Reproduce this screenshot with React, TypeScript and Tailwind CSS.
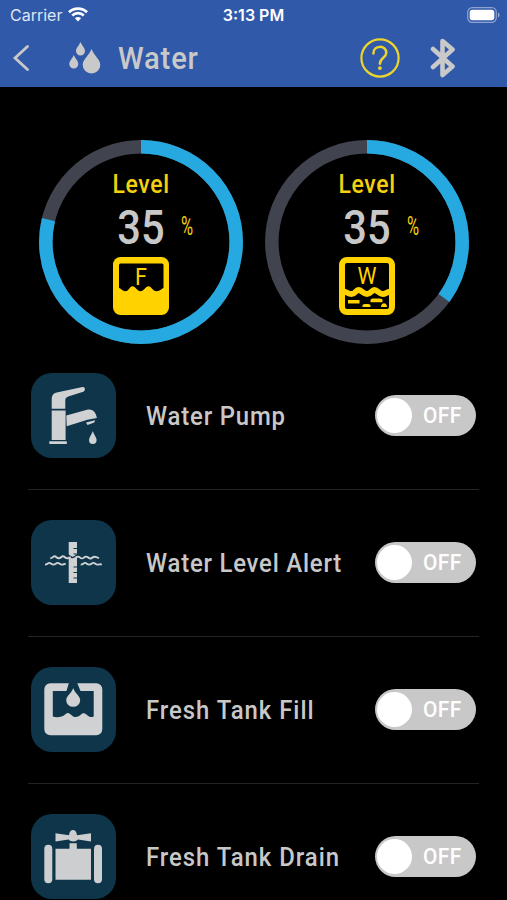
import React, { useState } from 'react';

const Wifi = () => (
  <svg width="20" height="15" viewBox="0 0 20 15" fill="none" stroke="#fff" strokeWidth="2.7">
    <path d="M1 5.2C6 .4 14 .4 19 5.2" />
    <path d="M4.2 8.6C7.6 5.4 12.4 5.4 15.8 8.6" />
    <path d="M10 14.4 6.9 11.3C8.7 9.6 11.3 9.6 13.1 11.3Z" fill="#fff" stroke="none" />
  </svg>
);

const Battery = () => (
  <svg width="33" height="16" viewBox="0 0 33 16">
    <rect x=".7" y=".7" width="28.6" height="14.6" rx="4.6" fill="none" stroke="#fff" strokeOpacity=".45" strokeWidth="1.2" />
    <rect x="2.7" y="2.7" width="24.6" height="10.6" rx="2.8" fill="#fff" />
    <path d="M31 5.5c2 .8 2 4.2 0 5z" fill="#fff" fillOpacity=".5" />
  </svg>
);

const Drops = () => (
  <svg width="32" height="32" viewBox="0 0 32 32" fill="#c9c9c9">
    <path d="M11.5 0C13 3.6 16 6 16 9a4.4 4.4 0 0 1-9 0c0-3 3-5.4 4.5-9z" />
    <path d="M4.8 13c1.5 3.5 4.5 6 4.5 9a4.5 4.5 0 0 1-9 0c0-3 3-5.5 4.5-9z" />
    <path d="M22.5 7c2.5 6.5 8.8 10.5 8.8 16a8.7 8.3 0 0 1-17.6 0c0-5.5 6.3-9.5 8.8-16z" />
  </svg>
);

const Help = () => (
  <svg width="40" height="40" viewBox="0 0 40 40" fill="none" stroke="#edd42d">
    <circle cx="20" cy="20" r="18.6" strokeWidth="2.2" />
    <path d="M13.4 15.4C13.4 6.8 26.3 6.8 26.3 14.8C26.3 20 19.9 19.6 19.9 25.8" strokeWidth="2.5" strokeLinecap="round" />
    <circle cx="19.9" cy="30.1" r="1.9" fill="#edd42d" stroke="none" />
  </svg>
);

const Bluetooth = () => (
  <svg width="26" height="40" viewBox="0 0 26 40" fill="none" stroke="#c9c9c9" strokeWidth="4.6" strokeLinecap="round" strokeLinejoin="round">
    <path d="M3 11 22.5 28.5 12.5 37V3L22.5 11.5 3 29" />
  </svg>
);

const FreshTank = () => (
  <svg width="56" height="58" viewBox="0 0 56 58">
    <rect width="56" height="58" rx="7.5" fill="#ffd200" />
    <path d="M7.5 6.5H49a1.5 1.5 0 0 1 1.5 1.5V31C48.5 31.5 47.5 34.2 43.5 34.2S38.5 29.3 35.5 29.3 31 34.2 27.5 34.2 22.5 29.3 19.5 29.3 16 34.2 12.5 34.2 8.5 31.5 6 31V8a1.5 1.5 0 0 1 1.5-1.5z" fill="#000" />
    <text x="28" y="27.5" textAnchor="middle" fontFamily="Roboto, sans-serif" fontSize="24" fill="#ffd200" textLength="12" lengthAdjust="spacingAndGlyphs">F</text>
  </svg>
);

const WasteTank = () => (
  <svg width="56" height="58" viewBox="0 0 56 58">
    <rect x="3" y="3" width="50" height="52" rx="5" fill="#000" stroke="#ffd200" strokeWidth="6" />
    <path d="M4 34.5C8 34.5 8.5 37 12.5 37S16.5 33 19.5 33 24 37 28 37 32.5 33 35.5 33 40 37 43.5 37 48 34.5 52 34.5" fill="none" stroke="#ffd200" strokeWidth="5.8" />
    <path d="M9 43H20.5V46.5H9zM31.5 43c0-1 1-1.6 3-1.6h6c2 0 3 .8 3 1.6v2.3h-12zM23.5 48.3c0-1.8 8-1.8 8 0V50h-8zM42 50c0-5 6-5 6 0z" fill="#ffd200" />
    <text x="28" y="27" textAnchor="middle" fontFamily="Roboto, sans-serif" fontSize="23" fill="#ffd200" textLength="19" lengthAdjust="spacingAndGlyphs">W</text>
  </svg>
);

const Faucet = () => (
  <svg width="85" height="85" viewBox="0 0 85 85" fill="#cfd1d3">
    <path d="M20.7 35.7V26c0-3.5 1.5-5.7 5-6.4L51.5 14c2.8-.5 3.3 3.6.8 4.7L38 23.2c-2.5.8-3.7 1.8-3.7 4v8.5z" />
    <path d="M20.7 37.5h13.9V67H20.7zM18.3 68.3h17.5V71H18.3z" />
    <path d="M35.3 42.6 56 36.7c5-1.3 9 1.8 9.9 8.3l-9.5 1.8-20.7 6.5z" />
    <path d="M55 49.5 64 47.3c0 1.5-.8 2.5-2 2.8l-5.5 1.8z" />
    <path d="M61.8 58c1 3.7 3.8 6.2 3.8 9a3.8 4 0 0 1-7.6 0c0-2.8 2.8-5.3 3.8-9z" />
  </svg>
);

const LevelAlert = () => (
  <svg width="85" height="85" viewBox="0 0 85 85" fill="none">
    <path d="M37.7 22H46V63H37.7z" fill="#cfd1d3" />
    <path d="M46 28.5h-3.500M46 34h-3.500M46 47h-3.500M46 52.5h-3.500M46 58h-3.500" stroke="#0e3549" strokeWidth="1.2" />
    <path d="M36.500 35c2 0 2.500 2.500 5 2.500s3-2.500 5.500-2.500" stroke="#0e3549" strokeWidth="1.5" />
    <g stroke="#cfd1d3" strokeWidth="1.9">
      <path d="M19.3 38.3c2.5 0 2.5-2 4.3-2s2 2 4.2 2 2.3-2 4.2-2 2 2 4.2 2 2.5-1 3.5-1M45 37.5c1-1.2 3-1.2 4 0s3 1.2 4 0 3-1.2 4.3 0 3 1.2 4.2 0 3-1.2 6.5.8" />
      <path d="M14 44.6c2.5 0 2.5-1.7 4.3-1.7s2 1.7 4.2 1.7 2.3-1.7 4.2-1.7 2 1.7 4.2 1.7 2.2-.8 3.8-.8M49.7 44.6c2.5 0 2.5-1.7 4.3-1.7s2 1.7 4.2 1.7 2.3-1.7 4.2-1.7 2 1.7 4.2 1.7 2.2-.8 4.2 0" />
    </g>
  </svg>
);

const TankFill = () => (
  <svg width="85" height="85" viewBox="0 0 85 85">
    <path d="M19.3 16.3H37.8L35.5 24H49.500L46.3 16.3H65.300a6 6 0 0 1 6 6v40a6 6 0 0 1-6 6h-46a6 6 0 0 1-6-6v-40a6 6 0 0 1 6-6z" fill="#d0d1d2" />
    <path d="M21.8 24H62.7V49.5C60.5 50.5 58.5 50.3 56 48S52 45.5 50 47.5 44 51.5 41 48.500 36.500 45 34 47.500 26 51 21.800 49.500z" fill="#0e3549" />
    <path d="M42.2 21c1.8 5.5 7 8 7 12.3a7 6.5 0 0 1-14 0c0-4.3 5.2-6.8 7-12.3z" fill="#d0d1d2" />
  </svg>
);

const TankDrain = () => (
  <svg width="85" height="85" viewBox="0 0 85 85" fill="#cccecf">
    <rect x="13.3" y="30.7" width="8" height="38.5" rx="4" />
    <rect x="63" y="30.7" width="8" height="38.5" rx="4" />
    <path d="M24.5 34.7h14v-5.5h7.3v5.5H60v31H24.5z" />
    <path d="M24.5 19.2 38 21.3C38.5 14.3 45.5 14.3 46 21.3L60 19.2v8.2L47 25.5c-2 2.5-7.5 2.5-9.5 0l-13 1.9z" />
  </svg>
);

interface GaugeProps {
  percent: number;
  value: number;
  children: React.ReactNode;
}

const Gauge: React.FC<GaugeProps> = ({ percent, value, children }) => (
  <div className="relative w-[204px] h-[204px]">
    <svg className="absolute inset-0" width="204" height="204" viewBox="0 0 204 204" fill="none" strokeWidth="13.5">
      <circle cx="102" cy="102" r="95.2" stroke="#41444e" />
      <circle cx="102" cy="102" r="95.2" stroke="#25a9e0" pathLength="100" strokeDasharray={`${percent} 100`} transform="rotate(-90 102 102)" />
    </svg>
    <div className="relative flex flex-col items-center pt-[30px]">
      <div className="text-[25px] leading-[30px] -mb-[2px] font-medium text-[#f5d00f] tracking-[0.7px] scale-x-[0.92]">Level</div>
      <div className="grid grid-cols-[1fr_48px_1fr] w-full h-[59px]">
        <span className="col-start-2 flex justify-center text-[49px] leading-[60px] font-medium text-[#c8c8c8] scale-x-[0.85]">{value}</span>
        <span className="pl-[16px] pt-[15px] text-[25px] leading-[28px] text-[#f5d00f]">
          <span className="inline-block origin-left scale-x-[0.66]">%</span>
        </span>
      </div>
      {children}
    </div>
  </div>
);

const rows = [
  { label: 'Water Pump', icon: <Faucet />, text: 'tracking-[0.9px]' },
  { label: 'Water Level Alert', icon: <LevelAlert />, text: 'tracking-[0.85px]' },
  { label: 'Fresh Tank Fill', icon: <TankFill />, text: 'tracking-[1.05px]' },
  { label: 'Fresh Tank Drain', icon: <TankDrain />, text: 'tracking-[1.05px]' },
];

export default function App() {
  const [on, setOn] = useState<boolean[]>([false, false, false, false]);

  return (
    <div className="w-[507px] h-[900px] overflow-hidden bg-black font-['Roboto',sans-serif]">
      <header className="h-[87px] bg-[#3159a9]">
        <div className="h-[29px] px-[10px] grid grid-cols-[1fr_auto_1fr] items-center text-white font-['Inter',sans-serif]">
          <div className="flex items-center gap-[6px] text-[16px] text-[#dfe6f4]">
            <span>Carrier</span>
            <Wifi />
          </div>
          <span className="text-[16px] font-semibold">3:13 PM</span>
          <div className="flex justify-end -mr-[3px]"><Battery /></div>
        </div>
        <div className="h-[58px] flex items-center">
          <button className="ml-[12px]">
            <svg width="18" height="28" viewBox="0 0 18 28" fill="none" stroke="#c9c9c9" strokeWidth="2.8" strokeLinecap="round">
              <path d="M15.5 2.5 3 14l12.5 11.5" />
            </svg>
          </button>
          <div className="ml-[39px]"><Drops /></div>
          <h1 className="ml-[17px] mt-[2px] w-[242px] text-[31px] leading-[36px] font-medium text-[#c9c9c9] tracking-[0.9px] origin-left scale-x-[0.94]">Water</h1>
          <button><Help /></button>
          <div className="ml-[30px]"><Bluetooth /></div>
        </div>
      </header>

      <section className="h-[256px] pt-[53px] pl-[39px] flex gap-[22px]">
        <Gauge percent={78.8} value={35}><FreshTank /></Gauge>
        <Gauge percent={35} value={35}><WasteTank /></Gauge>
      </section>

      <main className="px-[28px]">
        {rows.map((row, i) => (
          <div key={row.label} className="h-[147px] pt-[30px] pl-[3px] pr-[3px] flex items-start border-b border-[#242424]">
            <div className="w-[85px] h-[85px] shrink-0 rounded-[21px] bg-[#0e3549]">{row.icon}</div>
            <div className="h-[87px] ml-[30px] flex-1 min-w-0 flex items-center">
              <span className={`text-[26px] font-medium whitespace-nowrap text-[#c8c8c8] origin-left scale-x-[0.92] ${row.text}`}>{row.label}</span>
            </div>
            <button
              onClick={() => setOn(on.map((v, j) => (j === i ? !v : v)))}
              className="mt-[22px] w-[101px] h-[41px] shrink-0 rounded-full bg-[#c8c8c8] flex items-center pl-[2px]"
            >
              <span className="w-[35px] h-[35px] rounded-full bg-white" />
              <span className="ml-[11px] text-[22px] font-medium text-white origin-left scale-x-[0.95] tracking-[0.5px]">{on[i] ? 'ON' : 'OFF'}</span>
            </button>
          </div>
        ))}
      </main>
    </div>
  );
}
